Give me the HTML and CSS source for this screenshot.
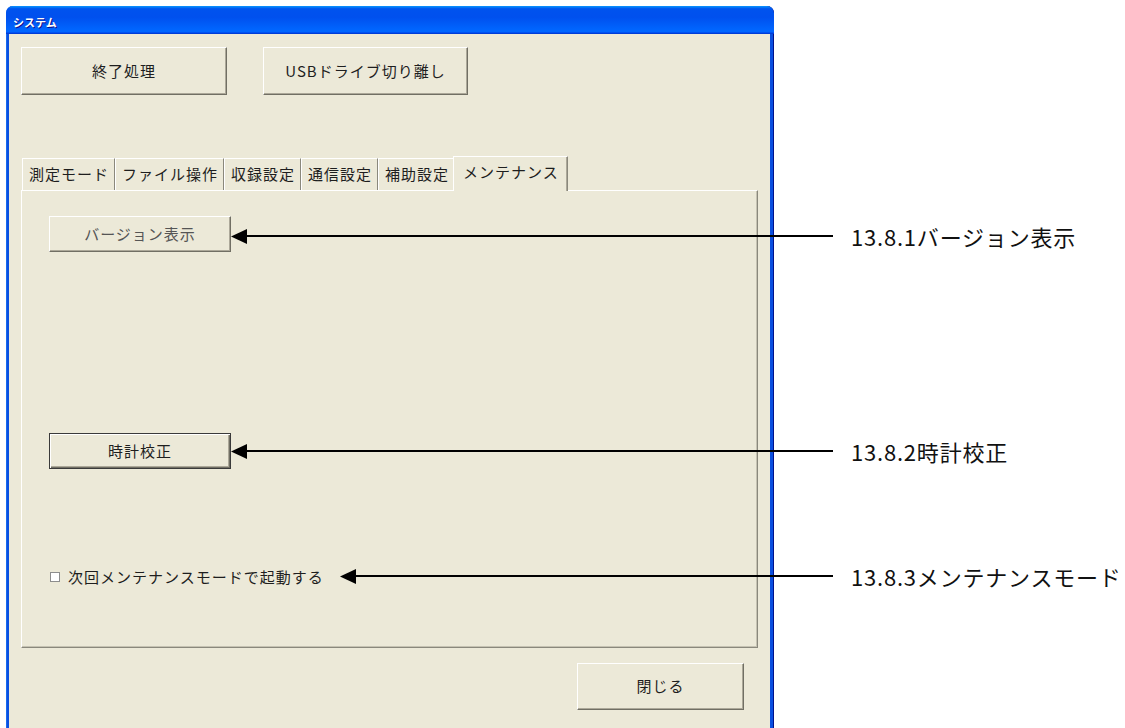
FILE: index.html
```html
<!DOCTYPE html>
<html lang="ja">
<head>
<meta charset="utf-8">
<title>システム</title>
<link rel="stylesheet" href="styles.css">
</head>
<body>
<div class="page">
  <div class="window">
    <div class="titlebar"><span class="title">システム</span></div>
    <div class="client">
      <div class="top-row">
        <button class="btn btn-top btn-end">終了処理</button>
        <button class="btn btn-top btn-usb">USBドライブ切り離し</button>
      </div>
      <div class="tabs">
        <div class="tab">測定モード</div>
        <div class="tab">ファイル操作</div>
        <div class="tab">収録設定</div>
        <div class="tab">通信設定</div>
        <div class="tab">補助設定</div>
        <div class="tab tab-active">メンテナンス</div>
      </div>
      <div class="panel">
        <button class="btn btn-panel btn-version">バージョン表示</button>
        <button class="btn btn-panel btn-default btn-clock">時計校正</button>
        <label class="check-row"><span class="checkbox"></span><span class="check-text">次回メンテナンスモードで起動する</span></label>
      </div>
      <div class="bottom-row">
        <button class="btn btn-close">閉じる</button>
      </div>
    </div>
  </div>

  <div class="ann ann-1">
    <svg class="head" width="16" height="15" viewBox="0 0 16 15"><polygon points="0,7.5 16,0 16,15" fill="#000"/></svg>
    <div class="line line-long"></div>
    <span class="label">13.8.1バージョン表示</span>
  </div>
  <div class="ann ann-2">
    <svg class="head" width="16" height="15" viewBox="0 0 16 15"><polygon points="0,7.5 16,0 16,15" fill="#000"/></svg>
    <div class="line line-long"></div>
    <span class="label">13.8.2時計校正</span>
  </div>
  <div class="ann ann-3">
    <svg class="head" width="16" height="15" viewBox="0 0 16 15"><polygon points="0,7.5 16,0 16,15" fill="#000"/></svg>
    <div class="line line-short"></div>
    <span class="label">13.8.3メンテナンスモード</span>
  </div>
</div>
</body>
</html>
```

FILE: styles.css
```css
* { box-sizing: border-box; }
html, body { margin: 0; padding: 0; background: #fff; }
body { font-family: "Noto Sans CJK JP", "Noto Sans", sans-serif; }

.page {
  position: relative;
  width: 1125px;
  height: 728px;
  overflow: hidden;
}

.window {
  margin: 6px 0 0 6px;
  width: 768px;
  height: 722px;
  display: flex;
  flex-direction: column;
  border-radius: 7px 7px 0 0;
  background: #0a4fe0;
  box-shadow: inset 1px 0 #166aee, inset -1px 0 #00138c;
  overflow: hidden;
}

.titlebar {
  height: 28px;
  flex: none;
  display: flex;
  align-items: center;
  padding: 3px 0 0 7px;
  background: linear-gradient(180deg, #0997ff 0%, #0053ee 10%, #0050ee 40%, #0066ff 86%, #0066ff 92%, #005bff 94%, #003dd7 96%, #003dd7 100%);
  border-radius: 7px 7px 0 0;
}
.title {
  color: #fff;
  font-size: 11px;
  font-weight: bold;
  letter-spacing: 0;
  text-shadow: 1px 1px #0f1089;
}

.client {
  flex: 1;
  margin: 0 4px 0 3px;
  background: #ece9d8;
  padding: 13px 12px 0 12px;
  display: flex;
  flex-direction: column;
}

.btn {
  font-family: "Noto Sans CJK JP", "Noto Sans", sans-serif;
  font-size: 15px;
  letter-spacing: 1px;
  color: #1e1e1e;
  background: #ece9d8;
  border: 1px solid;
  border-color: #ffffff #716f64 #716f64 #ffffff;
  box-shadow: inset -1px -1px #aca899;
  padding: 0;
  margin: 0;
  display: flex;
  align-items: center;
  justify-content: center;
}

.top-row {
  display: flex;
  gap: 36px;
}
.btn-top { height: 48px; padding-bottom: 2px; }
.btn-end { width: 206px; }
.btn-usb { width: 205px; }

.tabs {
  margin-top: 61px;
  height: 34px;
  display: flex;
  align-items: flex-end;
  padding-left: 1px;
  position: relative;
  z-index: 1;
}
.tab {
  height: 32px;
  padding: 0 5px 3px 6px;
  display: flex;
  align-items: center;
  font-size: 15px;
  letter-spacing: 1px;
  color: #1e1e1e;
  border-top: 1px solid #fff;
  border-left: 1px solid #fff;
  border-right: 1px solid #8a887c;
  background: #ece9d8;
}
.tab-active {
  height: 35px;
  margin-left: -2px;
  margin-bottom: -1px;
  padding: 0 8px 5px 9px;
  border-right: 1px solid #8a887c;
  box-shadow: inset -1px 0 #aca899;
}

.panel {
  width: 737px;
  height: 458px;
  border: 1px solid;
  border-color: #ffffff #8a887c #8a887c #ffffff;
  box-shadow: inset -1px -1px #c5c2b2;
  padding: 25px 0 0 27px;
  display: flex;
  flex-direction: column;
  align-items: flex-start;
}
.btn-panel { width: 182px; height: 36px; padding-bottom: 2px; }
.btn-version { color: #555; }
.btn-clock { margin-top: 181px; }
.btn-default {
  border: 1px solid #3a3a3a;
  box-shadow: inset 1px 1px #fff, inset -1px -1px #716f64, inset -2px -2px #aca899;
}

.check-row {
  margin-top: 97px;
  height: 20px;
  display: flex;
  align-items: center;
  font-size: 15px;
  letter-spacing: 1px;
  color: #1e1e1e;
}
.checkbox {
  width: 10px;
  height: 10px;
  margin: 1px 8px 0 1px;
  border: 1px solid #8d8d8d;
  background: #fff;
}

.bottom-row {
  margin-top: 15px;
  display: flex;
  justify-content: flex-end;
  padding-right: 14px;
}
.btn-close { width: 167px; height: 47px; padding-bottom: 2px; }

/* annotation overlay */
.ann {
  position: absolute;
  height: 24px;
  display: flex;
  align-items: center;
}
.ann-1 { left: 231px; top: 224px; }
.ann-2 { left: 231px; top: 439px; }
.ann-3 { left: 340px; top: 564px; }
.head { flex: none; display: block; }
.line { height: 2px; background: #000; flex: none; }
.line-long { width: 586px; }
.line-short { width: 477px; }
.label {
  margin-left: 18px;
  font-size: 22px;
  letter-spacing: 0.8px;
  color: #111;
  white-space: nowrap;
  line-height: 24px;
}
```
